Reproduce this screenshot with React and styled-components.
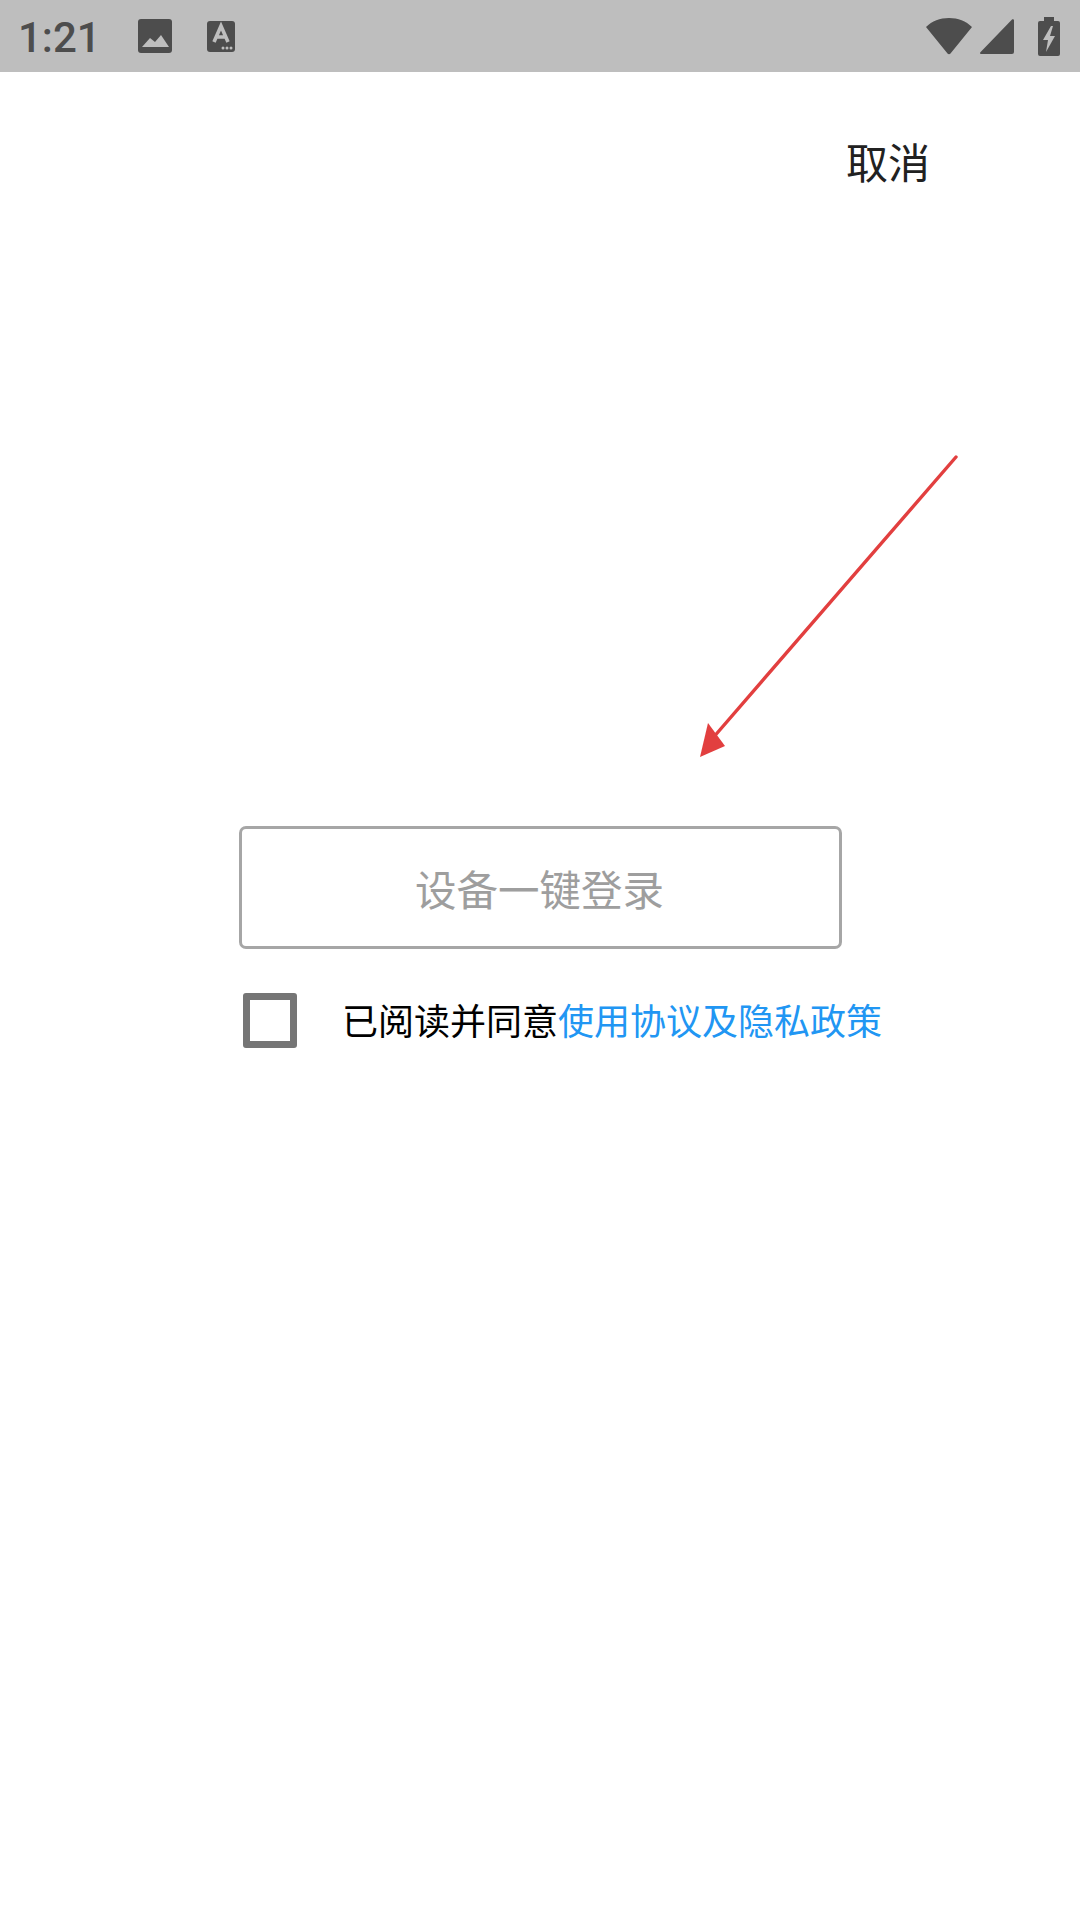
import styled, { createGlobalStyle } from "styled-components"

const GlobalStyle = createGlobalStyle`
html, body {
    margin: 0;
    padding: 0;
    background: #ffffff;
}
body {
    font-family: "Noto Sans CJK SC", "Roboto", sans-serif;
}
`

const Page = styled.div`
width: 1080px;
height: 1920px;
overflow: hidden;
background: #ffffff;
`

const StatusBar = styled.div`
box-sizing: border-box;
height: 72px;
padding: 0 20px 0 18px;
background: #bebebe;
display: flex;
align-items: center;
justify-content: space-between;
color: #4d4d4d;
`

const StatusGroup = styled.div`
display: flex;
align-items: center;
`

const Time = styled.span`
box-sizing: border-box;
font-family: "Roboto", sans-serif;
font-weight: 500;
font-size: 42px;
line-height: 72px;
padding-top: 3px;
width: 120px;
`

const Header = styled.div`
box-sizing: border-box;
height: 178px;
padding-right: 150px;
display: flex;
align-items: center;
justify-content: flex-end;
`

const Cancel = styled.span`
font-size: 42px;
line-height: 60px;
color: #212121;
`

const ArrowRow = styled.div`
margin-top: 205px;
padding-right: 122px;
display: flex;
justify-content: flex-end;
`

const LoginButton = styled.div`
box-sizing: border-box;
width: 603px;
height: 123px;
margin: 67px 0 0 239px;
padding-right: 2px;
border: 3px solid #a6a6a6;
border-radius: 7px;
display: flex;
align-items: center;
justify-content: center;
font-size: 41.5px;
color: #9e9e9e;
`

const Agreement = styled.div`
margin: 42px 0 0 243px;
display: flex;
align-items: center;
font-size: 36px;
line-height: 56px;
color: #000000;
`

const CheckBox = styled.div`
box-sizing: border-box;
width: 54px;
height: 55px;
margin-right: 45px;
border: 7px solid #757575;
border-radius: 3px;
`

const AgreementText = styled.span`
padding-bottom: 2px;
`

const Link = styled.span`
color: #2196f3;
`

const PictureIcon = () => (
    <svg width="34" height="34" viewBox="0 0 34 34" style={{ marginRight: 35 }}>
        <path fill="#4d4d4d" d="M3 0h28a3 3 0 0 1 3 3v28a3 3 0 0 1-3 3H3a3 3 0 0 1-3-3V3a3 3 0 0 1 3-3z" />
        <path fill="#bebebe" d="M4 28l8-9 5 4 6-7 8 12z" />
    </svg>
)

const KeyboardIcon = () => (
    <svg width="28" height="31" viewBox="0 0 28 31">
        <path fill="#4d4d4d" d="M3 0h22a3 3 0 0 1 3 3v25a3 3 0 0 1-3 3H3a3 3 0 0 1-3-3V3a3 3 0 0 1 3-3z" />
        <path fill="none" stroke="#bebebe" strokeWidth="3.600" d="M7 21l7-16 7 16M9.500 16h9" />
        <circle cx="16" cy="27" r="1.500" fill="#bebebe" />
        <circle cx="20" cy="27" r="1.500" fill="#bebebe" />
        <circle cx="24" cy="27" r="1.500" fill="#bebebe" />
    </svg>
)

const WifiIcon = () => (
    <svg width="46" height="37" viewBox="0 0 46 37" style={{ marginRight: 8 }}>
        <path fill="#4d4d4d" d="M0 9C6 3 14 0 23 0s17 3 23 9L24.500 35.500c-.8 1-2.200 1-3 0z" />
    </svg>
)

const SignalIcon = () => (
    <svg width="34" height="35" viewBox="0 0 34 35" style={{ marginRight: 24 }}>
        <path fill="#4d4d4d" d="M32 0.500c1-.7 2 0 2 1V33a2 2 0 0 1-2 2H1c-1 0-1.300-1-.6-1.700z" />
    </svg>
)

const BatteryIcon = () => (
    <svg width="22" height="39" viewBox="0 0 22 39">
        <path fill="#4d4d4d" d="M6 0h10v4h4a2 2 0 0 1 2 2v31a2 2 0 0 1-2 2H2a2 2 0 0 1-2-2V6a2 2 0 0 1 2-2h4z" />
        <path fill="#bebebe" d="M13 9L5 23h5l-2 12 9-16h-5l3-10z" />
    </svg>
)

const Arrow = () => (
    <svg width="262" height="304" viewBox="0 0 262 304">
        <line x1="260" y1="2" x2="16" y2="284" stroke="#e23f3f" strokeWidth="3.400" strokeLinecap="round" />
        <path fill="#e23f3f" d="M4 302L12 268L29 291z" />
    </svg>
)

export default function App() {
    return (
        <Page>
            <GlobalStyle />
            <StatusBar>
                <StatusGroup>
                    <Time>1:21</Time>
                    <PictureIcon />
                    <KeyboardIcon />
                </StatusGroup>
                <StatusGroup>
                    <WifiIcon />
                    <SignalIcon />
                    <BatteryIcon />
                </StatusGroup>
            </StatusBar>
            <Header>
                <Cancel>取消</Cancel>
            </Header>
            <ArrowRow>
                <Arrow />
            </ArrowRow>
            <LoginButton>设备一键登录</LoginButton>
            <Agreement>
                <CheckBox />
                <AgreementText>已阅读并同意<Link>使用协议及隐私政策</Link></AgreementText>
            </Agreement>
        </Page>
    )
}
